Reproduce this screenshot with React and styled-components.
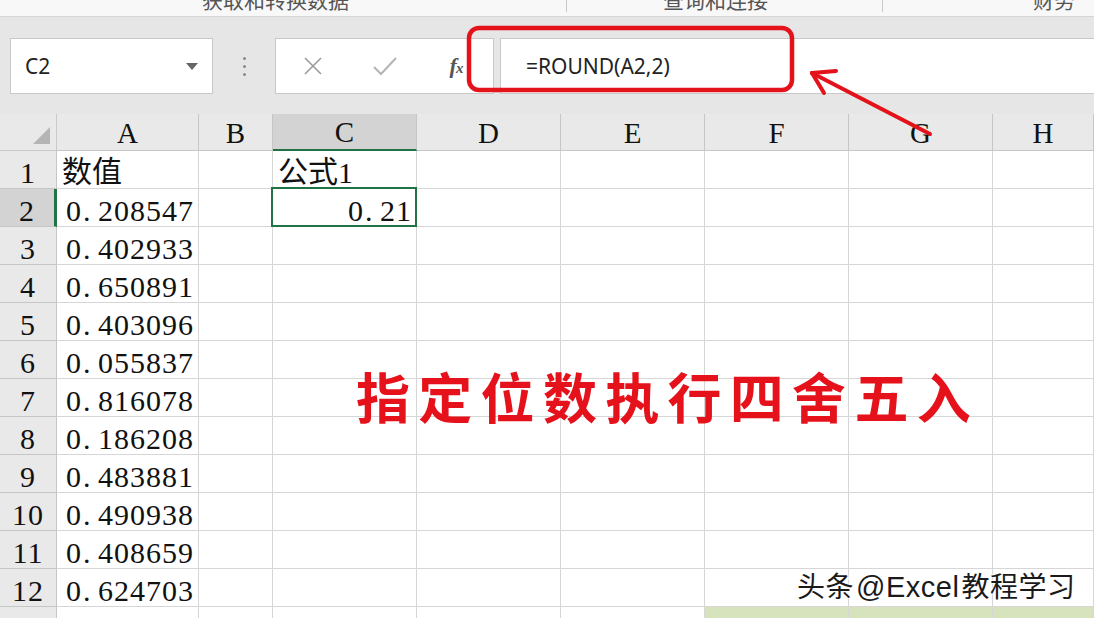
import React from "react";
import styled, { createGlobalStyle, css } from "styled-components";

const Global = createGlobalStyle`
  html, body { margin: 0; padding: 0; background: #ffffff; }
  body { width: 1094px; height: 618px; overflow: hidden; font-family: "Noto Sans", "Noto Sans CJK SC", sans-serif; }
`;

const Page = styled.div`
  position: relative;
  width: 1094px;
  height: 618px;
  overflow: hidden;
  display: flex;
  flex-direction: column;
  background: #fff;
`;

const RibbonStrip = styled.div`
  height: 16px;
  flex: none;
  background: #f8f8f8;
  border-bottom: 1px solid #d6d6d6;
  display: grid;
  grid-template-columns: 567px 316px 1fr;
  overflow: hidden;
`;

const RibbonGroup = styled.div`
  position: relative;
  border-right: ${(p) => (p.$last ? "none" : "1px solid #c9c9c9")};
  margin: 0 0 4px;
  overflow: hidden;
  font-family: "Noto Sans CJK SC", sans-serif;
  font-size: 21px;
  color: #555;
  line-height: 1;
  padding-left: ${(p) => p.$pad}px;
  & > span { display: block; margin-top: -11px; }
`;

const Toolbar = styled.div`
  height: 97px;
  flex: none;
  background: #e6e6e6;
  display: flex;
  align-items: flex-start;
  padding: 21px 0 0 10px;
  box-sizing: border-box;
`;

const Field = styled.div`
  height: 56px;
  box-sizing: border-box;
  background: #fff;
  border: 1px solid #c8c8c8;
  display: flex;
  align-items: center;
`;

const NameBox = styled(Field)`
  width: 203px;
  padding: 0 14px 0 14px;
  justify-content: space-between;
  font-size: 21px;
  color: #222;
`;

const DropTri = styled.span`
  width: 0;
  height: 0;
  border-left: 6px solid transparent;
  border-right: 6px solid transparent;
  border-top: 7px solid #666;
`;

const Dots = styled.div`
  width: 62px;
  height: 56px;
  display: flex;
  flex-direction: column;
  align-items: center;
  justify-content: center;
  gap: 5px;
  & > i { width: 3px; height: 3px; border-radius: 50%; background: #8a8a8a; display: block; }
`;

const FxBox = styled(Field)`
  width: 219px;
  padding: 0 0 0 24px;
  border-right: 1px solid #c8c8c8;
`;

const FxBtn = styled.div`
  width: ${(p) => p.$w}px;
  display: flex;
  justify-content: center;
  align-items: center;
  color: #9a9a9a;
`;

const FxLabel = styled.span`
  font-family: "Liberation Serif", "DejaVu Serif", serif;
  font-style: italic;
  font-weight: 700;
  font-size: 22px;
  color: #555;
  letter-spacing: -1px;
  & > small { font-size: 15px; }
`;

const FormulaInput = styled(Field)`
  flex: 1;
  margin-left: 6px;
  border-right: none;
  padding-left: 25px;
  font-size: 21px;
  color: #222;
`;

const COLS = [57, 142, 74, 144, 144, 144, 144, 144, 101];

const Sheet = styled.div`
  flex: 1;
  display: grid;
  grid-template-columns: ${COLS.map((c) => c + "px").join(" ")};
  grid-auto-rows: 38px;
  grid-template-rows: 37px;
  background: #fff;
`;

const cellFont = css`
  font-family: "Liberation Serif", "Noto Serif CJK SC", serif;
  font-size: 30px;
  letter-spacing: 1px;
  color: #111;
  line-height: 1.1;
`;

const Corner = styled.div`
  background: #e9e9e9;
  border-right: 1px solid #c9c9c9;
  border-bottom: 1px solid #c9c9c9;
  position: relative;
  &::after {
    content: "";
    position: absolute;
    right: 6px;
    bottom: 6px;
    width: 0;
    height: 0;
    border-left: 17px solid transparent;
    border-bottom: 17px solid #b5b5b5;
  }
`;

const ColHead = styled.div`
  ${cellFont}
  font-size: 29px;
  letter-spacing: 0;
  background: ${(p) => (p.$active ? "#d3d3d3" : "#e9e9e9")};
  border-right: 1px solid #c6c6c6;
  border-bottom: ${(p) => (p.$active ? "2px solid #217346" : "1px solid #c6c6c6")};
  display: flex;
  align-items: center;
  justify-content: center;
  padding-top: 3px;
  box-sizing: border-box;
`;

const RowHead = styled.div`
  ${cellFont}
  background: ${(p) => (p.$active ? "#d3d3d3" : "#e9e9e9")};
  border-right: ${(p) => (p.$active ? "3px solid #217346" : "1px solid #c6c6c6")};
  border-bottom: 1px solid #c6c6c6;
  display: flex;
  align-items: center;
  justify-content: center;
  padding-top: 6px;
  box-sizing: border-box;
`;

const Cell = styled.div`
  ${cellFont}
  position: relative;
  background: ${(p) => p.$fill || "#fff"};
  border-right: 1px solid #d6d6d6;
  border-bottom: 1px solid #d6d6d6;
  display: flex;
  align-items: center;
  justify-content: ${(p) => (p.$right ? "flex-end" : "flex-start")};
  padding: 6px ${(p) => (p.$right ? "4px" : "0")} 0 ${(p) => (p.$right ? "0" : "9px")};
  box-sizing: border-box;
  white-space: nowrap;
  ${(p) =>
    p.$selected &&
    css`
      &::after {
        content: "";
        position: absolute;
        left: -2px;
        top: -2px;
        right: -1px;
        bottom: -1px;
        border: 2px solid #217346;
        pointer-events: none;
      }
    `}
`;

const Dot = styled.span`
  display: inline-block;
  width: 16px;
  padding-left: 1px;
  box-sizing: border-box;
  text-align: left;
  letter-spacing: 0;
`;

const Han = styled.span`
  font-family: "Noto Sans CJK SC", sans-serif;
  font-size: 30px;
  letter-spacing: 0;
  position: relative;
  top: -3px;
  margin-left: -4px;
`;

const Overlay = styled.svg`
  position: absolute;
  left: 0;
  top: 0;
  pointer-events: none;
`;

const Caption = styled.div`
  position: absolute;
  left: 356px;
  top: 364px;
  font-family: "Noto Sans CJK SC", sans-serif;
  font-weight: 700;
  font-size: 54px;
  letter-spacing: 8.3px;
  color: #e5121b;
  line-height: 1.2;
  white-space: nowrap;
`;

const Watermark = styled.div`
  position: absolute;
  left: 797px;
  top: 565px;
  font-family: "Noto Sans CJK SC", sans-serif;
  font-size: 28px;
  letter-spacing: 0.5px;
  color: #1a1a1a;
  white-space: nowrap;
  text-shadow: 1px 1px 0 #fff, -1px -1px 0 #fff, 1px -1px 0 #fff, -1px 1px 0 #fff, 2px 2px 1px #fff;
  & > span { font-family: "Liberation Sans", sans-serif; font-size: 29px; margin: 0 2px; }
`;

const values = [
  "0.208547",
  "0.402933",
  "0.650891",
  "0.403096",
  "0.055837",
  "0.816078",
  "0.186208",
  "0.483881",
  "0.490938",
  "0.408659",
  "0.624703",
];

const letters = ["A", "B", "C", "D", "E", "F", "G", "H"];

function Num({ value }) {
  const [int, frac] = value.split(".");
  return (
    <span>
      {int}
      <Dot>.</Dot>
      {frac}
    </span>
  );
}

function cellContent(r, c) {
  if (r === 1 && c === 0) return { node: <Han>数值</Han> };
  if (r === 1 && c === 2)
    return {
      node: (
        <>
          <Han>公式</Han>1
        </>
      ),
    };
  if (r >= 2 && r <= 12 && c === 0) return { node: <Num value={values[r - 2]} /> };
  if (r === 2 && c === 2) return { node: <Num value="0.21" />, right: true, selected: true };
  return { node: null };
}

export default function App() {
  const rows = [];
  for (let r = 1; r <= 13; r++) {
    rows.push(
      <RowHead key={"rh" + r} $active={r === 2}>
        {r <= 12 ? r : ""}
      </RowHead>
    );
    for (let c = 0; c < 8; c++) {
      const info = cellContent(r, c);
      rows.push(
        <Cell
          key={r + "-" + c}
          $right={info.right}
          $selected={info.selected}
          $fill={r === 13 && c >= 5 ? "#d6e3bd" : null}
        >
          {info.node}
        </Cell>
      );
    }
  }

  return (
    <Page>
      <Global />
      <RibbonStrip>
        <RibbonGroup $pad={202}>
          <span>获取和转换数据</span>
        </RibbonGroup>
        <RibbonGroup $pad={96}>
          <span>查询和连接</span>
        </RibbonGroup>
        <RibbonGroup $pad={150} $last>
          <span>财务</span>
        </RibbonGroup>
      </RibbonStrip>

      <Toolbar>
        <NameBox>
          C2
          <DropTri />
        </NameBox>
        <Dots>
          <i />
          <i />
          <i />
        </Dots>
        <FxBox>
          <FxBtn $w={26}>
            <svg width="22" height="22" viewBox="0 0 22 22">
              <path d="M3 3 L19 19 M19 3 L3 19" stroke="#9a9a9a" strokeWidth="1.6" fill="none" />
            </svg>
          </FxBtn>
          <FxBtn $w={118}>
            <svg width="26" height="22" viewBox="0 0 26 22">
              <path d="M2 12 L9 19 L24 3" stroke="#b4b4b4" strokeWidth="2" fill="none" />
            </svg>
          </FxBtn>
          <FxBtn $w={24}>
            <FxLabel>
              f<small>x</small>
            </FxLabel>
          </FxBtn>
        </FxBox>
        <FormulaInput>=ROUND(A2,2)</FormulaInput>
      </Toolbar>

      <Sheet>
        <Corner />
        {letters.map((l) => (
          <ColHead key={l} $active={l === "C"}>
            {l}
          </ColHead>
        ))}
        {rows}
      </Sheet>

      <Overlay width="1094" height="618" viewBox="0 0 1094 618">
        <rect x="469" y="28" width="323" height="62" rx="10" ry="10" fill="none" stroke="#e3121b" strokeWidth="4.5" />
        <g stroke="#e3121b" strokeWidth="4" strokeLinecap="round" fill="none">
          <path d="M930 134 L812 73" />
          <path d="M812 73 L836 71" />
          <path d="M812 73 L824 93" />
        </g>
      </Overlay>

      <Caption>指定位数执行四舍五入</Caption>
      <Watermark>
        头条<span>@Excel</span>教程学习
      </Watermark>
    </Page>
  );
}
